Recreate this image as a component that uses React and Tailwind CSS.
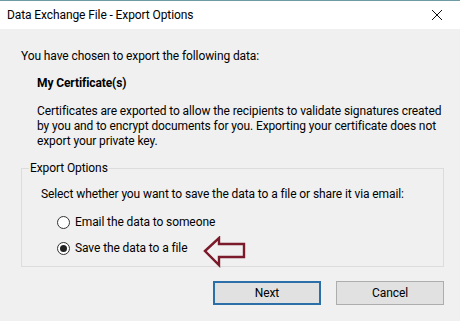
import { useState } from "react";

/* small hollow arrow drawn over the dialog, pointing at the selected option */
function PointerArrow() {
  return (
    <svg width="44" height="32" viewBox="0 0 44 32" className="absolute left-[146px] -top-[5px]">
      <path
        d="M2 15 L16 2 L16 8 L41 8 L41 21 L16 21 L16 29 Z"
        fill="none"
        stroke="#7a1a2a"
        strokeWidth="2.4"
        strokeLinejoin="miter"
      />
    </svg>
  );
}

function Radio({ checked, label, onSelect, children }) {
  return (
    <div className="relative flex items-center h-[15px]" onClick={onSelect}>
      <span className="w-[13px] h-[13px] rounded-full border border-[#333] bg-white flex items-center justify-center">
        {checked && <span className="w-[7px] h-[7px] rounded-full bg-[#222]" />}
      </span>
      <span className="ml-[5px] whitespace-nowrap">{label}</span>
      {children}
    </div>
  );
}

export default function App() {
  const [mode, setMode] = useState("file");

  return (
    <div
      className="w-[460px] h-[321px] bg-[#f0f0f0] text-[12px] leading-[15px] tracking-[-0.1px] text-black overflow-hidden"
      style={{ fontFamily: '"Segoe UI", Roboto, sans-serif' }}
    >
      {/* TITLE BAR */}
      <div className="h-[29px] bg-white border-t border-[#6f9ca2] flex items-center justify-between pl-[7px] pr-[3px]">
        <span className="whitespace-nowrap">Data Exchange File - Export Options</span>
        <svg width="40" height="28" viewBox="0 0 40 28">
          <path d="M15 9 L25 19 M25 9 L15 19" stroke="#111" strokeWidth="1" />
        </svg>
      </div>

      {/* BODY */}
      <div className="pl-[21px] pr-[16px] pt-[20px]">
        <p className="whitespace-nowrap">You have chosen to export the following data:</p>
        <p className="mt-[12px] ml-[16px] font-bold">My Certificate(s)</p>
        <div className="mt-[13px] ml-[16px] whitespace-nowrap">
          <p>Certificates are exported to allow the recipients to validate signatures created</p>
          <p>by you and to encrypt documents for you. Exporting your certificate does not</p>
          <p>export your private key.</p>
        </div>

        <fieldset className="mt-[12px] w-[423px] h-[106px] border border-[#dcdcdc] pl-[7px]">
          <legend className="px-[1px]">Export Options</legend>
          <div className="pl-[12px]">
            <p className="mt-[11px] whitespace-nowrap">
              Select whether you want to save the data to a file or share it via email:
            </p>
            <div className="pl-[16px] mt-[13px] flex flex-col gap-[11px]">
              <Radio checked={mode === "email"} label="Email the data to someone" onSelect={() => setMode("email")} />
              <Radio checked={mode === "file"} label="Save the data to a file" onSelect={() => setMode("file")}>
                <PointerArrow />
              </Radio>
            </div>
          </div>
        </fieldset>

        {/* BUTTONS */}
        <div className="mt-[14px] w-[423px] flex justify-end gap-[15px]">
          <button className="w-[108px] h-[24px] bg-[#e1e1e1] border-2 border-[#2b6ea8]">Next</button>
          <button className="w-[108px] h-[24px] bg-[#e1e1e1] border border-[#adadad]">Cancel</button>
        </div>
      </div>
    </div>
  );
}
